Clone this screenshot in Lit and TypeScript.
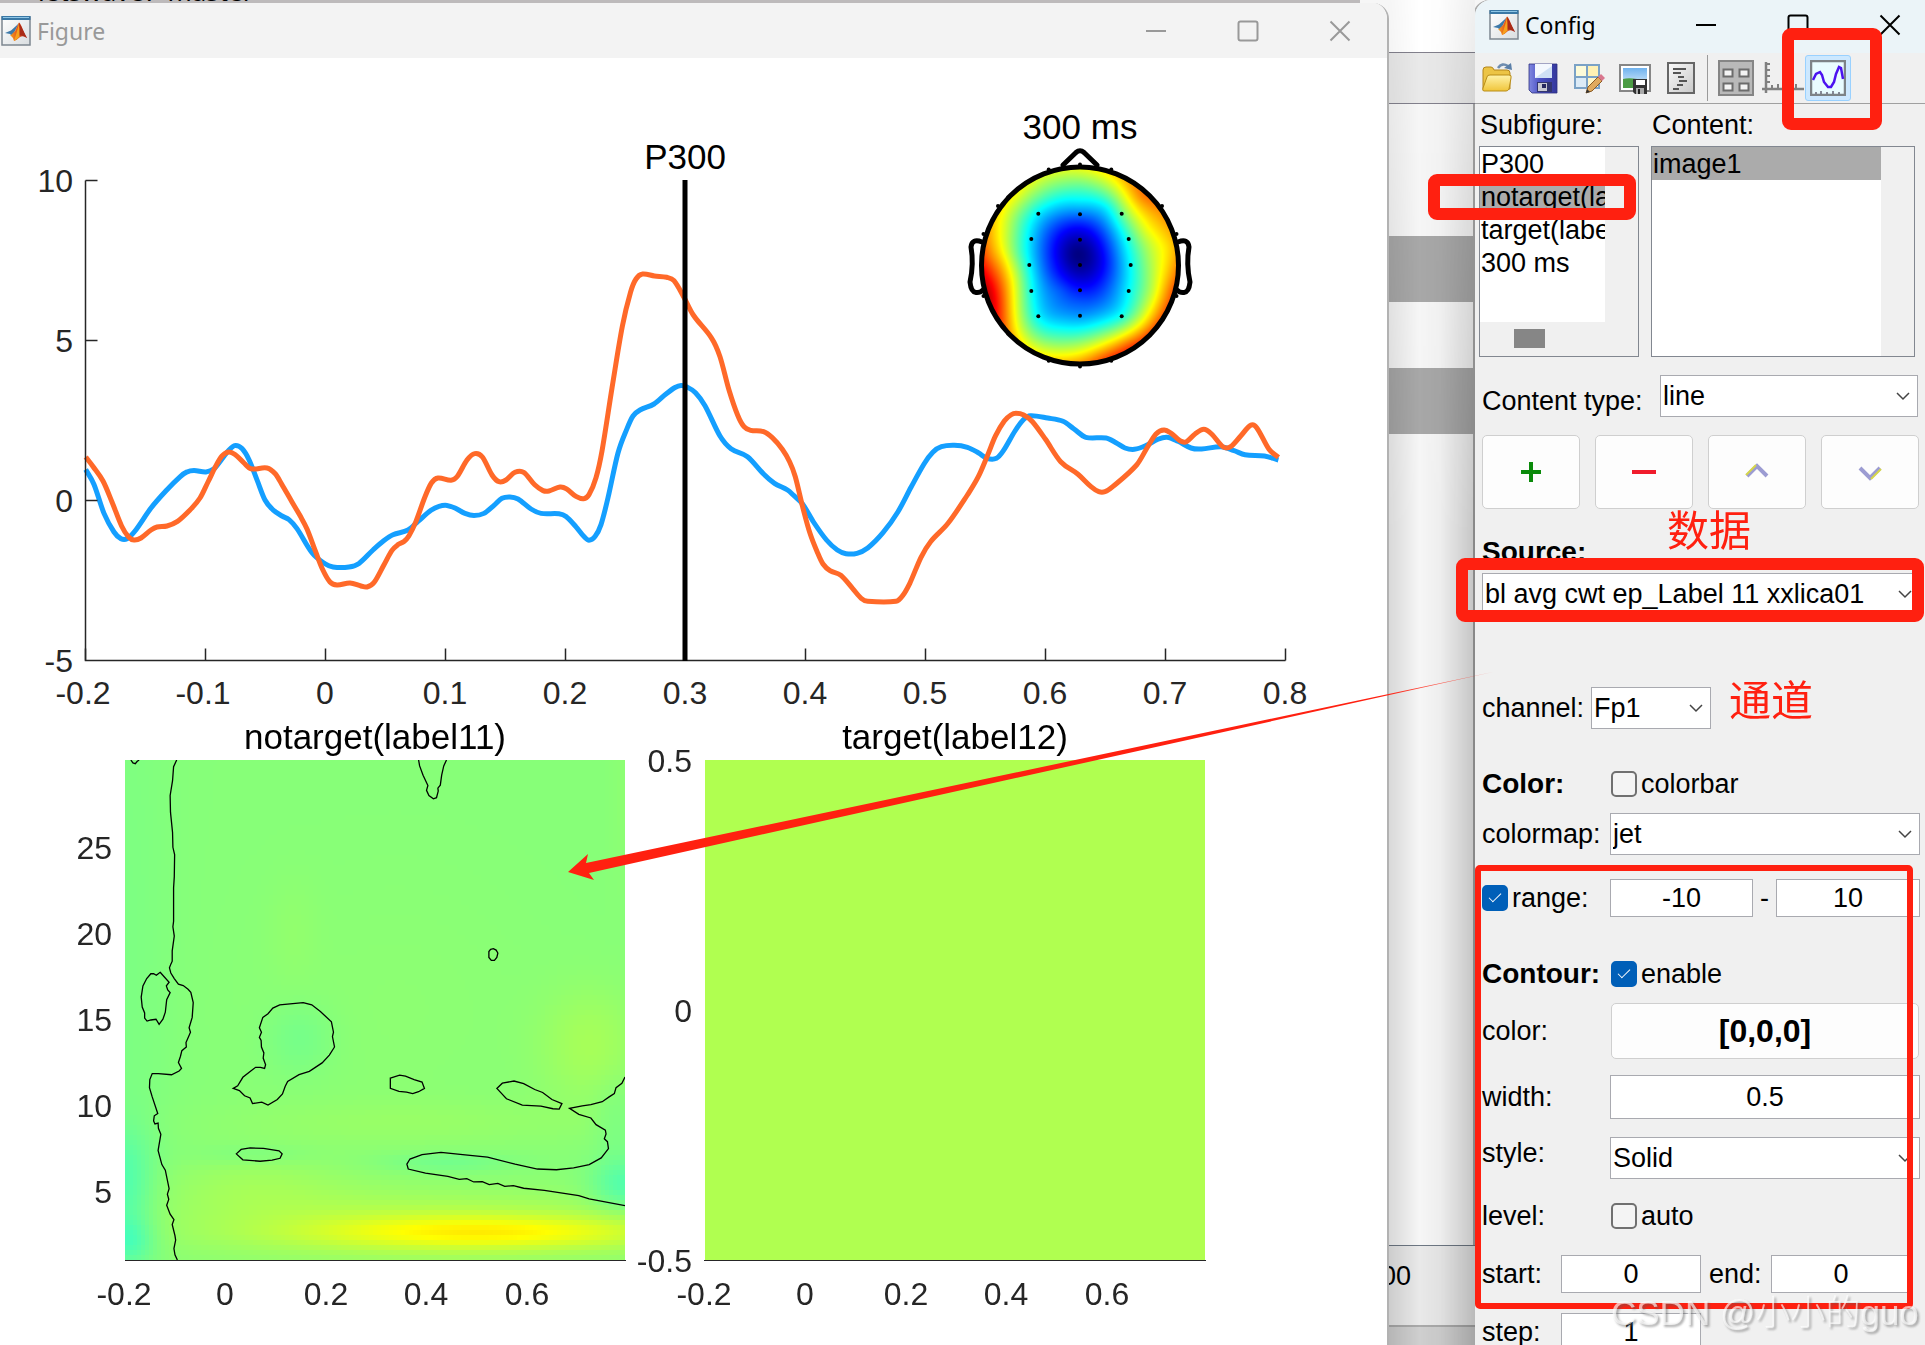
import { LitElement, html, svg, css } from "lit";
import { customElement, property } from "lit/decorators.js";

/** Maps a value in 0..1 to a colour of the jet colormap. */
function jet(v: number): [number, number, number] {
  const c = (n: number) => Math.round(255 * Math.max(0, Math.min(1, 1.5 - Math.abs(4 * v - n))));
  return [c(3), c(2), c(1)];
}

/** Thin plate spline through scattered [x, y, value] samples. */
function spline(samples: number[][]): (x: number, y: number) => number {
  const kernel = (dx: number, dy: number) => {
    const r2 = dx * dx + dy * dy;
    return r2 < 1e-9 ? 0 : r2 * Math.log(r2);
  };
  const n = samples.length;
  const m: number[][] = [];
  for (let i = 0; i < n + 3; i++) {
    const row = new Array(n + 4).fill(0);
    if (i < n) {
      const [x, y, v] = samples[i];
      for (let j = 0; j < n; j++) row[j] = kernel(x - samples[j][0], y - samples[j][1]);
      row[i] += 0.9;
      row[n] = 1;
      row[n + 1] = x;
      row[n + 2] = y;
      row[n + 3] = v;
    } else {
      for (let j = 0; j < n; j++) row[j] = i === n ? 1 : samples[j][i - n - 1];
    }
    m.push(row);
  }
  const size = n + 3;
  for (let c = 0; c < size; c++) {
    let p = c;
    for (let r = c + 1; r < size; r++) if (Math.abs(m[r][c]) > Math.abs(m[p][c])) p = r;
    [m[c], m[p]] = [m[p], m[c]];
    for (let r = 0; r < size; r++) {
      if (r === c) continue;
      const f = m[r][c] / m[c][c];
      if (f) for (let k = c; k <= size; k++) m[r][k] -= f * m[c][k];
    }
  }
  const w = m.map((row, i) => row[size] / row[i]);
  return (x, y) => {
    let s = w[n] + w[n + 1] * x + w[n + 2] * y;
    for (let j = 0; j < n; j++) s += w[j] * kernel(x - samples[j][0], y - samples[j][1]);
    return s;
  };
}

/** Smooth path through "x,y x,y ..." points. */
function smooth(points: string): string {
  const p = points.split(" ").map((s) => s.split(",").map(Number));
  let d = `M${p[0][0]} ${p[0][1]}`;
  for (let i = 0; i < p.length - 1; i++) {
    const a = p[Math.max(0, i - 1)];
    const b = p[i];
    const c = p[i + 1];
    const e = p[Math.min(p.length - 1, i + 2)];
    /* Tangents are scaled by the spacing on either side so uneven points do not overshoot. */
    const h = c[0] - b[0];
    const tb = i === 0 ? (c[1] - b[1]) / h : (c[1] - a[1]) / (c[0] - a[0]);
    const tc = i === p.length - 2 ? (c[1] - b[1]) / h : (e[1] - b[1]) / (e[0] - b[0]);
    const y1 = b[1] + (tb * h) / 3;
    const y2 = c[1] - (tc * h) / 3;
    d += ` C${(b[0] + h / 3).toFixed(1)} ${y1.toFixed(1)} ${(c[0] - h / 3).toFixed(1)} ${y2.toFixed(1)} ${c[0]} ${c[1]}`;
  }
  return d;
}

/* Scalp potential samples on a 600 x 600 head disc. */
const SCALP = [
  [288, 262, -0.01], [298, 300, 0.02], [298, 350, 0.1], [258, 195, 0.12], [298, 183, 0.13],
  [152, 223, 0.33], [173, 143, 0.35], [298, 146, 0.24], [298, 108, 0.36], [298, 58, 0.47],
  [298, 23, 0.57], [278, 11, 0.59], [358, 23, 0.61], [423, 43, 0.67], [478, 93, 0.74],
  [538, 133, 0.73], [423, 143, 0.48], [444, 220, 0.41], [378, 123, 0.36], [498, 193, 0.61],
  [518, 143, 0.7], [568, 243, 0.66], [518, 273, 0.57], [450, 298, 0.38], [378, 293, 0.15],
  [408, 263, 0.26], [444, 376, 0.38], [518, 373, 0.57], [578, 303, 0.71], [573, 373, 0.78],
  [538, 453, 0.77], [423, 452, 0.39], [478, 453, 0.56], [478, 513, 0.76], [438, 543, 0.8],
  [398, 568, 0.81], [358, 573, 0.76], [298, 578, 0.68], [238, 573, 0.64], [228, 543, 0.54],
  [238, 493, 0.4], [173, 452, 0.36], [218, 443, 0.29], [298, 450, 0.27], [358, 453, 0.32],
  [298, 374, 0.15], [238, 373, 0.22], [152, 376, 0.38], [146, 298, 0.37], [208, 313, 0.18],
  [178, 373, 0.31], [118, 373, 0.53], [88, 413, 0.67], [48, 413, 0.86], [28, 373, 0.91],
  [18, 323, 0.86], [23, 273, 0.76], [28, 213, 0.7], [48, 153, 0.65], [78, 193, 0.57],
  [68, 293, 0.67], [98, 333, 0.6], [108, 263, 0.47], [118, 453, 0.55], [98, 493, 0.66],
  [158, 513, 0.52], [178, 553, 0.6], [128, 533, 0.63], [68, 463, 0.78], [108, 93, 0.6],
  [178, 43, 0.57], [178, 93, 0.47], [118, 153, 0.47], [238, 23, 0.57], [398, 373, 0.26],
  [358, 393, 0.21], [358, 243, 0.12], [228, 233, 0.12], [228, 293, 0.13], [298, 413, 0.22],
].map(([x, y, v]) => [x / 60, y / 60, v]);

/* Time-frequency power as bumps: [x, y, spread x, spread y, height]. */
const POWER = [
  [360, 472, 115, 11, 0.09], [310, 466, 180, 24, 0.05], [130, 425, 70, 22, 0.022],
  [280, 362, 150, 16, 0.014], [465, 285, 36, 40, 0.03], [0, 425, 20, 40, -0.05],
  [4, 480, 18, 16, -0.05], [0, 200, 34, 240, -0.01], [500, 426, 24, 18, -0.055],
  [175, 278, 24, 24, -0.02], [168, 170, 18, 36, 0.008], [320, 402, 48, 7, -0.022],
  [130, 394, 40, 7, -0.014], [270, 250, 110, 100, 0.006], [500, 40, 10, 60, 0.006],
  [490, 360, 16, 30, -0.016],
];

@customElement("jet-field")
class JetField extends LitElement {
  @property() kind = "scalp";

  static styles = css`
    :host { display: block; }
    canvas { display: block; width: 100%; height: 100%; }
    .scalp { border-radius: 50%; }
  `;

  firstUpdated() {
    const canvas = this.renderRoot.querySelector("canvas")!;
    const size = canvas.width;
    const ctx = canvas.getContext("2d")!;
    const img = ctx.createImageData(size, size);
    let value: (x: number, y: number) => number;
    if (this.kind === "scalp") {
      const f = spline(SCALP);
      value = (x, y) => Math.max(0, f((x / size) * 10, (y / size) * 10));
    } else {
      value = (x, y) => {
        const qx = Math.floor(x / 4) * 4 + 2;
        const qy = Math.floor(y / 5) * 5 + 2;
        let v = 0.507;
        for (const [cx, cy, sx, sy, a] of POWER) {
          v += a * Math.exp(-(((qx - cx) / sx) ** 2 + ((qy - cy) / sy) ** 2) / 2);
        }
        return v;
      };
    }
    for (let y = 0; y < size; y++) {
      for (let x = 0; x < size; x++) {
        const [r, g, b] = jet(value(x, y));
        img.data.set([r, g, b, 255], (y * size + x) * 4);
      }
    }
    ctx.putImageData(img, 0, 0);
  }

  render() {
    const size = this.kind === "scalp" ? 200 : 500;
    return html`<canvas class=${this.kind} width=${size} height=${size}></canvas>`;
  }
}

const NO_TARGET =
  "85.7,469.6 94,484.4 104,513.4 114,532 121,538.8 127,538.8 135,531 151,508 167,489.7 180,476.8 187,471.9 194,470.5 206,471.9 214,468.8 222,459 229,450 235,445.5 242,448.6 249,459.8 257,479.9 265,500 273,509.8 282,516 289,519.6 297,528.6 312,552.7 325,563.8 333,567 349,567 359,563.4 373,550 384,540.6 393,534.8 408,530 418,521.4 431,510.3 439,506.3 447,505.4 455,508 465,513.4 474,515.6 484,513.4 494,505.4 502,498.2 510,496.9 518,499 531,509 541,513.4 559,513.8 566,516.5 576,526.8 584,536.6 589,540.2 595,536.6 601,524.6 608,497.8 618,453 627,428.6 633,416 640,410 654,404 666,394 675,387.5 681,385.5 687,387 695.5,392.7 705,405.7 720,436 731,448.7 747.5,456.7 763.6,474 774.5,483.3 787.5,490 794,495.7 802.6,504 813.5,522 826.5,540 837.3,550 846,553.7 857,553.3 867.7,548 883,532.7 898,511.7 911,487.3 924,464 932.8,452.3 941.4,446.7 954.4,445.3 967.4,447.3 978.3,452.7 987,458.3 996.5,458.3 1003.4,450.7 1015,431 1023.8,419.3 1030.3,415.7 1047.7,418 1063,421.3 1073.7,428.7 1085.8,437.3 1106,438 1116,442.7 1125,448 1134.4,449.3 1145,446 1158,439.3 1167,437.3 1178,441.3 1191,448 1201.6,449 1221,446.7 1234,450.7 1245,454.7 1264.5,456 1278.4,460";

const TARGET =
  "85.7,457 93,466.5 103,481 112,502 121.6,526 128.6,537 134,540 141,538 151,530 157,527 167,526 177.5,521.4 190,510 200,498 208,482 216,465.6 222,456 228.6,452 235,454.5 244,463 251,468.8 267,468 275.5,474 281.6,484 292,502 300,515.6 307,529 316,552.7 322.4,569 330,582 337,585 350,583 361,586 367,587 374,582.6 384,564.7 392,550.4 398,544.6 404,541.5 409,535.7 416,521.4 424.5,498 431.4,483 438,478 451,480.3 457,476.8 467,460 474.7,453.6 482.4,457 492,475 499,481.7 506,480 515,472.3 523.7,472.3 534.7,484.8 543,490.6 549,491 560,487 566.5,488.8 576,496.4 583.7,498.7 589,494.6 596,477.7 602,451 612,388 622.4,326 630.6,292 636,279 642.4,274 654.5,276 666.7,277.3 674,280.7 683.6,296.7 693.3,315 711.7,338.3 720,356.7 729,390 737.6,415 744,426.7 750.6,430.3 763.6,431.7 772.3,437.7 782.3,449.3 789.6,461.7 795.3,476.7 802.6,506.7 810,533.3 817.8,553.3 823,564 830,570.7 840.8,575.3 852.5,588.3 861.2,598.3 867.7,601.3 896,601.3 902.4,596 909.8,583.3 921,557.3 930.6,541.7 948,523.3 967.4,495 978.3,476.7 987,456.7 995.6,435.7 1004.3,421 1010.8,415 1016,413.3 1023.8,415 1032.5,421.7 1045.5,439.3 1060.7,461.7 1078,474.3 1091,486.7 1098.8,491.7 1105,491.7 1112.7,486.7 1136.6,465 1147.4,447.3 1156,434 1164,430 1171.3,433.3 1180,440.7 1186.4,441.7 1195,434 1203.8,429.3 1211.6,434 1223.3,447 1230.7,446.7 1240.7,436 1250.6,425.3 1256.7,427.7 1269,449.3 1278.4,457.3";

const CONTOURS = [
  "M90 54 L96 62 103 64 108 58 114 54",
  "M223 54 L214 72 211 110 204 150 205 195 211 250 212 290 217 310 216 370 214 400 214 490 212 505 216 530 210 570 210 598 206 606 202 616 206 630 216 645 228 660 242 664 256 674 264 682 271 710 268 750 259 778 263 790 250 818 251 830 238 840 234 855 228 872 237 888 230 895 208 905 170 902 152 902 145 918 144 940 152 965 168 1010 158 1016 156 1030 160 1038 169 1036 170 1050 177 1066 169 1110 180 1148 190 1163 201 1213 196 1228 200 1242 194 1258 204 1282 215 1297 210 1310 218 1340 220 1352 215 1375 218 1392 225 1406",
  "M175 628 L201 655 193 665 197 676 204 683 194 702 190 736 183 755 172 769 163 755 148 757 137 760 130 752 130 738 123 722 120 695 125 665 136 645 148 632 156 632 164 636Z",
  "M925 54 L928 70 938 95 952 123 948 136 955 150 968 159 977 156 982 138 981 130 988 122 992 95 998 70 1006 54",
  "M590 710 L615 716 640 734 672 762 678 790 675 802 681 830 666 852 645 873 608 896 578 905 545 923 538 936 530 957 515 972 488 987 470 979 443 983 436 968 420 962 405 948 387 942 400 935 415 912 438 895 452 885 466 885 478 888 481 878 474 860 476 846 469 830 468 812 463 804 469 790 463 778 473 750 488 740 502 725 522 716Z",
  "M1134 566 L1142 564 1150 568 1155 576 1152 588 1145 596 1136 596 1129 588 1129 572Z",
  "M843 914 L870 906 887 909 912 918 935 925 942 942 925 951 908 956 890 952 868 950 843 942Z",
  "M1152 942 L1168 928 1202 922 1230 929 1262 945 1285 953 1312 972 1341 983 1333 998 1315 997 1280 990 1226 987 1180 970Z",
  "M396 1119 L410 1107 436 1103 475 1104 520 1111 529 1119 523 1131 500 1136 465 1139 415 1135Z",
  "M1524 911 L1515 928 1498 940 1493 956 1478 965 1458 978 1425 986 1400 989 1363 996 1390 1012 1425 1022 1440 1040 1467 1055 1469 1065 1464 1078 1473 1086 1476 1105 1455 1130 1420 1148 1375 1157 1325 1162 1270 1160 1205 1147 1125 1128 1060 1122 990 1115 935 1121 900 1133 891 1147 895 1160 945 1171 1010 1180 1043 1188 1065 1186 1085 1195 1110 1194 1130 1202 1155 1199 1175 1207 1200 1205 1230 1212 1290 1218 1390 1232 1420 1241 1524 1259",
];

const matlabIcon = html`<svg class="app-icon" viewBox="0 0 30 30" aria-hidden="true">
  <defs>
    <linearGradient id="flame" x1="0" x2="1"><stop offset="0" stop-color="#f7a21b" /><stop offset=".45" stop-color="#e2521d" /><stop offset="1" stop-color="#9c1c16" /></linearGradient>
    <linearGradient id="paper" x1="0" x2="1" y1="0" y2="1"><stop offset="0" stop-color="#fff" /><stop offset="1" stop-color="#d9dde0" /></linearGradient>
  </defs>
  <rect x="1" y="1" width="28" height="28" fill="url(#paper)" stroke="#7d8790" stroke-width="1.5" />
  <rect x=".5" y="0" width="29" height="4" fill="#3a78a5" /><rect x="2" y="1" width="26" height="1" fill="#8fc6e6" />
  <path d="M4 17 L10 14.500 L15 10 L18 7 L14 15 L11 20 L9 18Z" fill="#3d79a9" />
  <path d="M10 19 L14 15 L18 6.500 Q20 8 22 14 Q24 19 26 22 Q22 19 19 21 Q16 24 13 25 Q12 21 9 19Z" fill="url(#flame)" />
  <path d="M18 6.500 Q17 13 13 25 Q16 24 19 20Z" fill="#f6a11d" />
  <path d="M18 6.500 Q19 12 18.500 20 Q21 18 26 22 Q22 14 18 6.500Z" fill="#a92a17" />
</svg>`;

const minimizeGlyph = html`<svg class="glyph" viewBox="0 0 22 22" aria-hidden="true"><path d="M1 11H21" /></svg>`;
const maximizeGlyph = html`<svg class="glyph" viewBox="0 0 22 22" aria-hidden="true"><rect x="1.500" y="1.500" width="19" height="19" rx="2" /></svg>`;
const closeGlyph = html`<svg class="glyph" viewBox="0 0 22 22" aria-hidden="true"><path d="M1.500 1.500 20.500 20.500 M20.500 1.500 1.500 20.500" /></svg>`;

const titleBarStyles = css`
  .title-bar { display: flex; align-items: center; font-family: "Noto Sans", "Open Sans", sans-serif; font-size: 23px; }
  .title-bar h1 { margin: 0 auto 0 6px; font: inherit; }
  .app-icon { width: 30px; height: 30px; flex: none; }
  .window-button { border: 0; padding: 0; background: none; width: 92px; height: 52px; display: grid; place-items: center; color: inherit; }
  .glyph { width: 22px; height: 22px; fill: none; stroke: currentColor; stroke-width: 2; }
`;

@customElement("figure-window")
class FigureWindow extends LitElement {
  static styles = [
    titleBarStyles,
    css`
      :host { display: block; background: #fff; border-radius: 0 16px 0 0; overflow: hidden; border-right: 2px solid #b2b2b2; margin-right: -1px; position: relative; z-index: 1; }
      .title-bar { height: 55px; padding: 0 1px; background: #f3f3f3; color: #999; }
      .plots { display: block; width: 100%; font-family: "Liberation Sans", Arial, sans-serif; }
      .tick-label { font-size: 32px; fill: #262626; }
      .plot-title { font-size: 35px; fill: #000; text-anchor: middle; }
      .x-label { text-anchor: middle; }
      .y-label { text-anchor: end; }
      .axis { fill: none; stroke: #262626; stroke-width: 1.500; }
      .baseline { stroke: #262626; stroke-width: 1; }
      .curve { fill: none; stroke-width: 5; stroke-linejoin: round; }
      .blue { stroke: #149fff; }
      .orange { stroke: #ff6929; }
      .marker { stroke: #000; stroke-width: 5; }
      .head { fill: none; stroke: #000; stroke-width: 5; stroke-linejoin: round; stroke-linecap: round; }
      .contour { fill: none; stroke: #000; stroke-width: 1.300; vector-effect: non-scaling-stroke; }
      .flat { fill: #b0ff50; }
    `,
  ];

  private electrodes() {
    const points: number[][] = [
      [1038.3, 213.7], [1080, 214.3], [1121.7, 213.7], [1031.3, 239], [1080, 239.7], [1128.7, 239],
      [1029.3, 265], [1080, 265], [1130.7, 265], [1031.3, 291], [1080, 290.3], [1128.7, 291],
      [1038.3, 316.3], [1080, 315.7], [1121.7, 316.3],
      [1080, 164.5], [1048.7, 169.5], [1111.3, 169.5], [998, 206], [1162, 206], [983.5, 234], [1176.5, 234],
      [983.5, 296], [1176.5, 296], [1048.7, 360.8], [1111.3, 360.8], [1080, 366.5],
    ];
    return points.map(([x, y]) => svg`<circle cx=${x} cy=${y} r="2" />`);
  }

  render() {
    const times = [-0.2, -0.1, 0, 0.1, 0.2, 0.3, 0.4, 0.5, 0.6, 0.7, 0.8];
    const px = (t: number) => Math.round(85 + (t + 0.2) * 1200);
    const py = (v: number) => 500 - v * 32;
    const short = [-0.2, 0, 0.2, 0.4, 0.6];
    return html`
      <header class="title-bar">
        ${matlabIcon}
        <h1>Figure</h1>
        <button class="window-button" aria-label="Minimize">${minimizeGlyph}</button>
        <button class="window-button" aria-label="Maximize">${maximizeGlyph}</button>
        <button class="window-button" aria-label="Close">${closeGlyph}</button>
      </header>
      <svg class="plots" viewBox="0 58 1387 1287" role="img" aria-label="P300 figure">
        <path class="curve blue" d=${smooth(NO_TARGET)} />
        <path class="curve orange" d=${smooth(TARGET)} />
        <path class="axis" d="M85.500 180.500V660.500H1285.500 M85.500 180.500h12 M85.500 340.500h12 M85.500 500.500h12" />
        ${times.map((t) => svg`<path class="axis" d="M${px(t) + 0.5} 660.500v-12" /><text class="tick-label x-label" x=${px(t) - (t < 0 ? 2 : 0)} y="704">${t}</text>`)}
        ${[10, 5, 0, -5].map((v) => svg`<text class="tick-label y-label" x="73" y=${py(v) + 12}>${v}</text>`)}
        <path class="marker" d="M685 180V661" />
        <text class="plot-title" x="685" y="169">P300</text>

        <text class="plot-title" x="1080" y="139">300 ms</text>
        <foreignObject x="981" y="166" width="199" height="199"><jet-field kind="scalp"></jet-field></foreignObject>
        <g class="head">
          <path d="M1063 165 L1076 152.500 Q1080 149 1084 152.500 L1097 165" />
          <path d="M982 242 Q972 238 971 247 Q974 264 970 282 Q971 292 976 292.500 Q980 293 983 290" />
          <path d="M1178 242 Q1188 238 1189 247 Q1186 264 1190 282 Q1189 292 1184 292.500 Q1180 293 1177 290" />
          <circle cx="1080" cy="265.500" r="98.500" />
        </g>
        ${this.electrodes()}

        <text class="plot-title" x="375" y="749">notarget(label11)</text>
        <foreignObject x="125" y="760" width="500" height="500"><jet-field kind="power"></jet-field></foreignObject>
        <svg x="125" y="760" width="500" height="500" viewBox="73 54 1451 1352" preserveAspectRatio="none">
          ${CONTOURS.map((d) => svg`<path class="contour" d=${d} />`)}
        </svg>
        <path class="baseline" d="M125 1260.500H626" />
        ${short.map((t) => svg`<text class="tick-label x-label" x=${Math.round(125 + (t + 0.2) * 502) - (t < 0 ? 1 : 0)} y="1305">${t}</text>`)}
        ${[25, 20, 15, 10, 5].map((v, i) => svg`<text class="tick-label y-label" x="112" y=${859 + i * 86}>${v}</text>`)}

        <text class="plot-title" x="955" y="749">target(label12)</text>
        <rect class="flat" x="705" y="760" width="500" height="500" />
        <path class="baseline" d="M704 1260.500H1206" />
        ${short.map((t) => svg`<text class="tick-label x-label" x=${Math.round(705 + (t + 0.2) * 502) - (t < 0 ? 1 : 0)} y="1305">${t}</text>`)}
        ${[0.5, 0, -0.5].map((v, i) => svg`<text class="tick-label y-label" x="692" y=${772 + i * 250}>${v}</text>`)}
      </svg>
    `;
  }
}

const icons = {
  open: html`<svg class="tool-icon" viewBox="0 0 32 32"><defs><linearGradient id="fold" x2="0" y2="1"><stop stop-color="#fff3a8" /><stop offset="1" stop-color="#f0c53a" /></linearGradient></defs><path d="M17 6 Q21 0 27 4" stroke="#6f8db0" stroke-width="2.500" /><path d="M23 6 L31 8 L30 1Z" fill="#5b7fa8" /><path d="M2 27V8Q2 5 5 5H10Q12 5 13 8H26Q29 8 29 11V27Z" fill="#ecc445" stroke="#b3851a" /><path d="M3 29 Q1 29 2 26 L6 15Q6 13 9 13H28Q31 13 30 16L28 27Q27 29 25 29Z" fill="url(#fold)" stroke="#b98d18" /></svg>`,
  save: html`<svg class="tool-icon" viewBox="0 0 32 32"><defs><linearGradient id="disk" x2="1"><stop stop-color="#8088e0" /><stop offset=".4" stop-color="#4a50c4" /><stop offset="1" stop-color="#34389c" /></linearGradient></defs><path d="M2 2H30V31H5L2 28Z" fill="url(#disk)" stroke="#2d317f" stroke-width=".8" /><rect x="8" y="2" width="17" height="14" fill="#f4f8fe" /><path d="M8 16 25 4V16Z" fill="#cfe0f5" /><rect x="10" y="20" width="15" height="10" fill="#33366f" /><rect x="11" y="21" width="9" height="8" fill="#c9cad2" /><rect x="15" y="22" width="4" height="4" fill="#27295f" /></svg>`,
  edit: html`<svg class="tool-icon" viewBox="0 0 32 32"><rect x="1" y="2" width="26" height="25" fill="#7ba2c6" /><rect x="3" y="4" width="10" height="10" fill="#fdfbd9" /><rect x="15" y="4" width="10" height="10" fill="#fff1b4" /><rect x="3" y="16" width="10" height="9" fill="#dcebf7" /><rect x="15" y="16" width="10" height="9" fill="#fff6c8" /><path d="M13 31 L15 25 L25 15 L29 19 L19 29Z" fill="#e0aa5e" stroke="#8a5a24" /><path d="M25 15 L28 12 L32 16 L29 19Z" fill="#d9768e" /><path d="M13 31 L14 27 L17 30Z" fill="#333" /></svg>`,
  picture: html`<svg class="tool-icon" viewBox="0 0 32 32"><defs><linearGradient id="sky" x2="0" y2="1"><stop stop-color="#6fb2ee" /><stop offset="1" stop-color="#e4f3fd" /></linearGradient></defs><rect x="1" y="3" width="30" height="26" fill="#fff" stroke="#868686" stroke-width="2" /><rect x="4" y="6" width="24" height="20" fill="url(#sky)" /><path d="M4 17 Q12 15 28 19V26H4Z" fill="#4c9c44" /><path d="M14 17H28V32H16L14 30Z" fill="#333" /><rect x="17" y="18" width="9" height="5" fill="#fff" /><rect x="17" y="26" width="8" height="6" fill="#aaa" /><rect x="19" y="27" width="2" height="5" fill="#222" /></svg>`,
  script: html`<svg class="tool-icon" viewBox="0 0 32 32"><defs><linearGradient id="sheet" x2="1" y2="1"><stop stop-color="#fafafa" /><stop offset="1" stop-color="#c8c8c8" /></linearGradient></defs><rect x="3" y="1" width="26" height="30" fill="url(#sheet)" stroke="#666" stroke-width="2" /><path d="M8 7H21 M8 11H16 M13 15H19 M14 19H22 M12 23H18 M8 27H14" stroke="#555" stroke-width="1.800" /></svg>`,
  layout: html`<svg class="tool-icon large" viewBox="0 0 36 36"><rect x="1" y="1" width="34" height="34" fill="#b9b9b9" stroke="#858585" stroke-width="2" /><path d="M5.500 9.500h9v7h-9z M21.500 9.500h9v7h-9z M5.500 23.500h9v7h-9z M21.500 23.500h9v7h-9z" fill="#f4f4f4" stroke="#6c6c6c" stroke-width="2" /></svg>`,
  axes: html`<svg class="tool-icon wide" viewBox="0 0 42 36"><path d="M4 2V33 M0 29H42" stroke="#808080" stroke-width="2.500" /><path d="M4 4h4 M4 10h4 M4 16h4 M4 22h4 M10 29v-4 M16 29v-5 M22 29v-4 M28 29v-4 M34 29v-5" stroke="#808080" stroke-width="2" /></svg>`,
  curve: html`<svg class="tool-icon large" viewBox="0 0 36 36"><rect x="1" y="1" width="34" height="34" fill="#e9fcff" stroke="#7d8387" stroke-width="2.500" /><path d="M3 20 L6 14 L10 12 L12 15 L14 22 L18 27 L21 27 L24 22 L26 14 L29 7 L31 8 L33 19" fill="none" stroke="#4b12f0" stroke-width="2.500" /><path d="M6 34v-2 M11 34v-3 M17 34v-2 M23 34v-3 M29 34v-2" stroke="#667" stroke-width="1.500" /></svg>`,
};

@customElement("config-window")
class ConfigWindow extends LitElement {
  static styles = [
    titleBarStyles,
    css`
      :host { display: block; background: #f0f0f0; border-radius: 16px 0 0 0; overflow: hidden; box-shadow: -2px 0 0 #aaa; font-family: "Liberation Sans", Arial, sans-serif; font-size: 27px; line-height: 32px; color: #000; }
      .title-bar { height: 50px; padding: 0 0 3px 14px; background: #ebf4f8; }
      .title-bar .window-button { height: 50px; }
      .title-bar .window-button:last-child { margin-right: -11px; }
      .toolbar { display: flex; align-items: center; height: 51px; padding: 0 6px; border-bottom: 1px solid #a0a0a0; gap: 14px; box-sizing: border-box; }
      .tool { border: 0; padding: 0; background: none; display: grid; place-items: center; }
      .tool-icon { width: 32px; height: 32px; display: block; fill: none; }
      .tool-icon.large { width: 36px; height: 36px; }
      .tool-icon.wide { width: 42px; height: 36px; }
      .divider { width: 1px; height: 46px; background: #9a9a9a; margin: 0 -4px; }
      .mode-tools { display: flex; align-items: center; gap: 8px; }
      .tool.active { box-sizing: border-box; width: 46px; height: 46px; margin-left: -7px; border: 1px solid #99d1ff; border-radius: 3px; background: #cce8ff; }
      .form { display: flex; flex-direction: column; padding: 0 5px 0 7px; }
      .row { display: grid; grid-template-columns: 128px minmax(0, 1fr); align-items: center; min-height: 42px; }
      .gap-s { margin-top: 8px; }
      .gap-m { margin-top: 16px; }
      .gap-l { margin-top: 18px; }
      .gap-xl { margin-top: 22px; }
      .gap-xxl { margin-top: 34px; }
      .gap-section { margin-top: 72px; }
      .lists { display: grid; grid-template-columns: 160px minmax(0, 1fr); column-gap: 12px; margin: 0 5px 0 -3px; }
      .lists label { padding: 5px 0 5px 1px; }
      .list-box { display: grid; border: 1px solid #828790; height: 209px; background: #f0f0f0; }
      .list-box.narrow { grid-template: minmax(0, 1fr) 34px / minmax(0, 1fr) 33px; }
      .list-box.broad { grid-template: minmax(0, 1fr) / minmax(0, 1fr) 33px; }
      .list { border: 0; margin: 0; padding: 0; outline: 0; overflow: hidden; background: #fff; font: inherit; color: #000; width: 100%; height: 100%; border-radius: 0; scrollbar-width: none; }
      .list option { padding: 2px 0 0 1px; min-height: 31px; line-height: 31px; color: #000; white-space: nowrap; }
      .list option:checked { background: #ababab linear-gradient(#ababab, #ababab); color: #000; }
      .thumb { width: 31px; height: 19px; margin: 7px 0 0 34px; background: #868686; grid-row: 2; }
      .content-type { grid-template-columns: 178px minmax(0, 1fr); padding-right: 2px; }
      .low { align-self: end; }
      .high { align-self: start; }
      .actions { display: flex; justify-content: space-between; gap: 15px; padding-right: 1px; }
      .push { flex: 1; height: 74px; border: 1px solid #cfcfcf; border-radius: 5px; background: #fdfdfd; padding: 0; display: grid; place-items: center; }
      .push svg { width: 26px; height: 26px; fill: none; }
      .heading { font-weight: 700; font-size: 28px; }
      .channel { grid-template-columns: 109px 120px; }
      .picker { position: relative; display: block; }
      .picker select { appearance: none; display: block; box-sizing: border-box; width: 100%; height: 42px; margin: 0; padding: 0 40px 0 2px; border: 1px solid #a9aab0; border-radius: 0; background: #fff; color: #000; font: inherit; }
      .picker svg { position: absolute; right: 8px; top: 14px; width: 14px; height: 14px; fill: none; stroke: #444; stroke-width: 1.500; pointer-events: none; }
      .field { box-sizing: border-box; width: 100%; height: 38px; margin: 0; padding: 0; border: 1px solid #a9aab0; background: #fff; text-align: center; font: inherit; color: #000; }
      .field.tall { height: 44px; }
      .check { display: flex; align-items: center; gap: 4px; }
      .check input { appearance: none; box-sizing: border-box; width: 26px; height: 26px; margin: 0 0 0 1px; border: 2px solid #707070; border-radius: 5px; background: #f4f4f4; display: grid; place-items: center; }
      .check input:checked { background: #005fb8; border-color: #005fb8; }
      .check input:checked::after { content: ""; width: 11px; height: 5px; margin-top: -4px; border: solid #fff; border-width: 0 0 1px 1px; transform: rotate(-45deg); }
      .flush input { margin-left: 0; }
      .range { display: grid; grid-template-columns: 143px minmax(0, 1fr) 144px; align-items: center; text-align: center; }
      .swatch { width: auto; height: 56px; margin: 0 1px; border: 1px solid #cfcfcf; border-radius: 5px; background: #fdfdfd; font: 700 32px "Liberation Sans", Arial, sans-serif; color: #000; padding: 0; }
      .levels { grid-template-columns: 79px 140px 70px 140px; }
      .levels .second { padding-left: 8px; }
    `,
  ];

  private picker(id: string, value: string, label = "") {
    return html`<span class="picker"
      ><select id=${id} aria-label=${label || id}><option>${value}</option></select
      ><svg viewBox="0 0 14 14" aria-hidden="true"><path d="M1 4 L7 10 L13 4" /></svg
    ></span>`;
  }

  render() {
    return html`
      <header class="title-bar">
        ${matlabIcon}
        <h1>Config</h1>
        <button class="window-button" aria-label="Minimize">${minimizeGlyph}</button>
        <button class="window-button" aria-label="Maximize">${maximizeGlyph}</button>
        <button class="window-button" aria-label="Close">${closeGlyph}</button>
      </header>
      <nav class="toolbar">
        <button class="tool" aria-label="Open">${icons.open}</button>
        <button class="tool" aria-label="Save">${icons.save}</button>
        <button class="tool" aria-label="Edit layout">${icons.edit}</button>
        <button class="tool" aria-label="Save picture">${icons.picture}</button>
        <button class="tool" aria-label="Script">${icons.script}</button>
        <span class="divider"></span>
        <span class="mode-tools">
          <button class="tool" aria-label="Figure">${icons.layout}</button>
          <button class="tool" aria-label="Axes">${icons.axes}</button>
          <button class="tool active" aria-label="Content">${icons.curve}</button>
        </span>
      </nav>
      <form class="form">
        <div class="lists">
          <label for="subfigure">Subfigure:</label>
          <label for="content">Content:</label>
          <div class="list-box narrow">
            <select class="list" id="subfigure" size="5">
              <option>P300</option>
              <option selected>notarget(label11)</option>
              <option>target(label12)</option>
              <option>300 ms</option>
            </select>
            <span class="thumb"></span>
          </div>
          <div class="list-box broad">
            <select class="list" id="content" size="6"><option selected>image1</option></select>
          </div>
        </div>
        <div class="row content-type gap-l">
          <label class="low" for="type">Content type:</label>
          ${this.picker("type", "line", "Content type")}
        </div>
        <div class="actions gap-l">
          <button type="button" class="push" aria-label="Add"><svg viewBox="0 0 26 26"><path d="M13 3V23 M3 13H23" stroke="#0a8a0a" stroke-width="4" /></svg></button>
          <button type="button" class="push" aria-label="Remove"><svg viewBox="0 0 26 26"><path d="M1 13H25" stroke="#f01c2c" stroke-width="4" /></svg></button>
          <button type="button" class="push" aria-label="Move up"><svg viewBox="0 0 26 26"><path d="M3 17 L13 7 L23 17" stroke="#9c9cd2" stroke-width="4" /><path d="M2 16 L12 6" stroke="#d6d64a" stroke-width="2" /></svg></button>
          <button type="button" class="push" aria-label="Move down"><svg viewBox="0 0 26 26"><path d="M3 9 L13 19 L23 9" stroke="#9c9cd2" stroke-width="4" /><path d="M14 20 L24 10" stroke="#d6d64a" stroke-width="2" /></svg></button>
        </div>
        <div class="row gap-xl"><label class="heading" for="source">Source:</label></div>
        ${this.picker("source", "bl avg cwt ep_Label 11 xxlica01", "Source")}
        <div class="row channel gap-section">
          <label for="channel">channel:</label>
          ${this.picker("channel", "Fp1")}
        </div>
        <div class="row gap-xxl">
          <span class="heading">Color:</span>
          <label class="check"><input type="checkbox" />colorbar</label>
        </div>
        <div class="row gap-s">
          <label for="colormap">colormap:</label>
          ${this.picker("colormap", "jet")}
        </div>
        <div class="row gap-xl">
          <label class="check flush"><input type="checkbox" checked />range:</label>
          <div class="range">
            <input class="field" aria-label="Range minimum" value="-10" />
            <span>-</span>
            <input class="field" aria-label="Range maximum" value="10" />
          </div>
        </div>
        <div class="row gap-xxl">
          <span class="heading">Contour:</span>
          <label class="check"><input type="checkbox" checked />enable</label>
        </div>
        <div class="row gap-s">
          <label for="color">color:</label>
          <button type="button" class="swatch" id="color">[0,0,0]</button>
        </div>
        <div class="row gap-m">
          <label for="width">width:</label>
          <input class="field tall" id="width" value="0.5" />
        </div>
        <div class="row gap-l">
          <label class="high" for="style">style:</label>
          ${this.picker("style", "Solid")}
        </div>
        <div class="row gap-m">
          <span>level:</span>
          <label class="check"><input type="checkbox" />auto</label>
        </div>
        <div class="row levels gap-m">
          <label for="start">start:</label>
          <input class="field" id="start" value="0" />
          <label class="second" for="end">end:</label>
          <input class="field" id="end" value="0" />
        </div>
        <div class="row levels gap-m">
          <label for="step">step:</label>
          <input class="field" id="step" value="1" />
        </div>
      </form>
    `;
  }
}

@customElement("app-root")
class AppRoot extends LitElement {
  static styles = css`
    :host { display: block; position: relative; height: 100vh; overflow: hidden; background: #f6f6f6; font-family: "Liberation Sans", Arial, sans-serif; }
    .desktop { display: grid; grid-template-columns: minmax(0, 1fr) 87px 450px; height: 100%; }
    .left { display: flex; flex-direction: column; min-width: 0; background: linear-gradient(90deg, #bdbabb 98%, #f6f6f6 98%); }
    .left figure-window { flex: 1; }
    .path { height: 3px; overflow: hidden; display: flex; align-items: flex-end; gap: 20px; padding-left: 10px; font: 26px/23px "Noto Sans", sans-serif; }
    .behind { position: relative; display: flex; flex-direction: column; overflow: hidden; }
    .behind::after { content: ""; position: absolute; inset: 0; background: linear-gradient(90deg, rgba(0, 0, 0, 0.12), rgba(0, 0, 0, 0) 36%, rgba(0, 0, 0, 0.03) 60%, rgba(0, 0, 0, 0.2)); mask-image: linear-gradient(rgba(0, 0, 0, 0.3), #000 40%); }
    .band { flex: none; box-sizing: border-box; height: 66px; }
    .caption { height: 52px; background: #fff; }
    .menu { height: 52px; background: #e9e9e9; border-top: 1px solid #82808c; border-bottom: 1px solid #82808c; }
    .space { height: 132px; }
    .picked { background: #a8a8a8; }
    .rest { flex: 1; }
    .status { height: 80px; border-top: 1px solid #6e7884; background: #e9e9e9; font-size: 27px; line-height: 60px; padding-right: 64px; display: flex; justify-content: flex-end; }
    .foot { height: 20px; border-top: 2px solid #aaa; background: #cfcfcf; }
    .notes { position: absolute; inset: 0; z-index: 2; width: 100%; height: 100%; pointer-events: none; }
    .frame { fill: none; stroke: #ff2010; stroke-width: 12; }
    .frame.thin { stroke-width: 6; }
    .note { font-family: "Noto Sans CJK SC", sans-serif; font-size: 42px; fill: #ff2010; }
    .watermark { font-family: "Liberation Sans", "Noto Sans CJK SC", sans-serif; font-size: 35px; font-weight: 300; fill: #fff; fill-opacity: 0.65; filter: drop-shadow(2px 2px 1px rgba(90, 90, 90, 0.75)); }
  `;

  render() {
    return html`
      <main class="desktop">
        <section class="left">
          <div class="path"><span>›</span><span>letswave7-master</span><span>›</span></div>
          <figure-window></figure-window>
        </section>
        <section class="behind">
          <div class="band caption"></div>
          <div class="band menu"></div>
          <div class="band space"></div>
          <div class="band picked"></div>
          <div class="band"></div>
          <div class="band picked"></div>
          <div class="rest"></div>
          <div class="band status">100</div>
          <div class="band foot"></div>
        </section>
        <config-window></config-window>
      </main>
      <svg class="notes" viewBox="0 0 1925 1345" preserveAspectRatio="xMaxYMin meet">
        <defs>
          <linearGradient id="fade" gradientUnits="userSpaceOnUse" x1="1380" x2="1493" y1="0" y2="0"><stop offset="0" stop-color="#ff2010" /><stop offset="1" stop-color="#ff2010" stop-opacity=".5" /></linearGradient>
        </defs>
        <rect class="frame" x="1788" y="34" width="88" height="90" rx="3" />
        <rect class="frame" x="1434" y="180" width="196" height="34" rx="3" />
        <rect class="frame" x="1462" y="564" width="456" height="52" rx="3" />
        <rect class="frame thin" x="1478" y="868" width="432" height="438" rx="2" />
        <path d="M568 872 L588 854 L586 863 L1493 672 L589 873 L594 880Z" fill="url(#fade)" />
        <text class="note" x="1667" y="546">数据</text>
        <text class="note" x="1729" y="716">通道</text>
        <text class="watermark" x="1611" y="1325">CSDN @小小的guo</text>
      </svg>
    `;
  }
}
